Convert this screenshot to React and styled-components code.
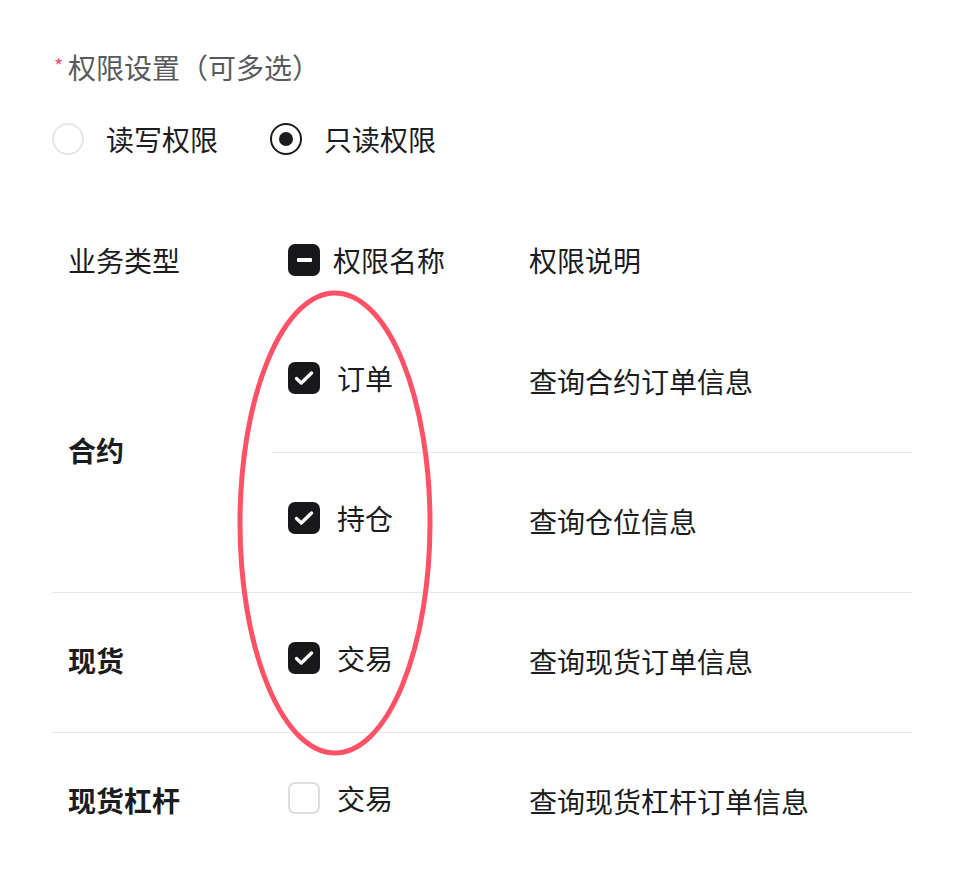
import styled, { createGlobalStyle } from "styled-components"

const GlobalStyle = createGlobalStyle`
  body {
    margin: 0;
    background: #ffffff;
    font-family: "Noto Sans CJK SC", "Noto Sans", sans-serif;
    color: #1c1c1e;
  }
`;

const Page = styled.div`
  position: relative;
  width: 968px;
  height: 872px;
  padding: 47px 56px 0 52px;
  box-sizing: border-box;
  overflow: hidden;
`;

const Title = styled.div`
  display: flex;
  align-items: center;
  height: 40px;
  font-size: 28px;
  color: #5a5a5e;
`;

const Star = styled.span`
  color: #f0506e;
  font-size: 20px;
  width: 16px;
  align-self: flex-start;
  margin-top: 4px;
  padding-left: 2px;
  box-sizing: border-box;
`;

const RadioRow = styled.div`
  display: flex;
  align-items: center;
  gap: 52px;
  height: 40px;
  margin-top: 32px;
`;

const RadioItem = styled.label`
  display: flex;
  align-items: center;
  gap: 22px;
  font-size: 28px;
`;

const RadioCircle = styled.span`
  width: 32px;
  height: 32px;
  border-radius: 50%;
  box-sizing: border-box;
  border: 2px solid ${(p) => (p.checked ? "#1c1c1e" : "#e6e6e8")};
  display: flex;
  align-items: center;
  justify-content: center;
  &::after {
    content: "";
    display: ${(p) => (p.checked ? "block" : "none")};
    width: 14px;
    height: 14px;
    border-radius: 50%;
    background: #1c1c1e;
  }
`;

const Table = styled.div`
  margin-top: 50px;
  display: flex;
  flex-direction: column;
`;

const HeaderRow = styled.div`
  display: grid;
  grid-template-columns: 220px 241px 1fr;
  height: 104px;
  align-items: center;
  font-size: 28px;
`;

const Cell = styled.div`
  padding-left: 16px;
  padding-bottom: ${(p) => p.lift || 0}px;
  display: flex;
  align-items: center;
  gap: ${(p) => p.gap || 0}px;
`;

const Group = styled.div`
  display: grid;
  grid-template-columns: 220px 1fr;
  border-top: ${(p) => (p.first ? "none" : "1px solid #e8e8ea")};
`;

const BizCell = styled.div`
  padding-left: 16px;
  padding-bottom: 6px;
  display: flex;
  align-items: center;
  font-size: 28px;
  font-weight: 700;
`;

const SubRows = styled.div`
  display: flex;
  flex-direction: column;
`;

const SubRow = styled.div`
  display: grid;
  grid-template-columns: 241px 1fr;
  height: 139px;
  align-items: center;
  font-size: 28px;
  border-top: ${(p) => (p.first ? "none" : "1px solid #e8e8ea")};
`;

const NameCell = styled.div`
  padding-left: 16px;
  padding-bottom: 10px;
  display: flex;
  align-items: center;
  gap: 17px;
`;

const Box = styled.span`
  width: 32px;
  height: 32px;
  border-radius: 7px;
  box-sizing: border-box;
  flex-shrink: 0;
  display: flex;
  align-items: center;
  justify-content: center;
  background: ${(p) => (p.on ? "#18181b" : "#ffffff")};
  border: ${(p) => (p.on ? "none" : "2px solid #dedee0")};
`;

const Dash = styled.span`
  width: 15px;
  height: 4px;
  border-radius: 1px;
  background: #ffffff;
`;

const Circle = styled.svg`
  position: absolute;
  left: 0;
  top: 0;
  pointer-events: none;
`;

const Check = () => (
  <svg width="32" height="32" viewBox="0 0 32 32">
    <path d="M8.5 16.5 L13.3 21 L23.5 11" fill="none" stroke="#fff" strokeWidth="3.4" strokeLinecap="round" strokeLinejoin="round" />
  </svg>
);

const groups = [
  {
    name: "合约",
    rows: [
      { label: "订单", desc: "查询合约订单信息", on: true },
      { label: "持仓", desc: "查询仓位信息", on: true },
    ],
  },
  { name: "现货", rows: [{ label: "交易", desc: "查询现货订单信息", on: true }] },
  { name: "现货杠杆", rows: [{ label: "交易", desc: "查询现货杠杆订单信息", on: false }] },
];

const App = () => {
  return (
    <Page>
      <GlobalStyle />
      <Title>
        <Star>*</Star>权限设置（可多选）
      </Title>
      <RadioRow>
        <RadioItem>
          <RadioCircle />
          读写权限
        </RadioItem>
        <RadioItem>
          <RadioCircle checked />
          只读权限
        </RadioItem>
      </RadioRow>
      <Table>
        <HeaderRow>
          <Cell lift={2}>业务类型</Cell>
          <Cell gap={13} lift={2}>
            <Box on>
              <Dash />
            </Box>
            权限名称
          </Cell>
          <Cell lift={2}>权限说明</Cell>
        </HeaderRow>
        {groups.map((g, gi) => (
          <Group key={g.name} first={gi === 0}>
            <BizCell>{g.name}</BizCell>
            <SubRows>
              {g.rows.map((r, ri) => (
                <SubRow key={r.label + ri} first={ri === 0}>
                  <NameCell>
                    <Box on={r.on}>{r.on && <Check />}</Box>
                    {r.label}
                  </NameCell>
                  <Cell lift={4}>{r.desc}</Cell>
                </SubRow>
              ))}
            </SubRows>
          </Group>
        ))}
      </Table>
      <Circle width="968" height="872">
        <ellipse cx="335" cy="523" rx="95" ry="230" fill="none" stroke="#ff5266" strokeWidth="5" />
      </Circle>
    </Page>
  )
}

export default App
